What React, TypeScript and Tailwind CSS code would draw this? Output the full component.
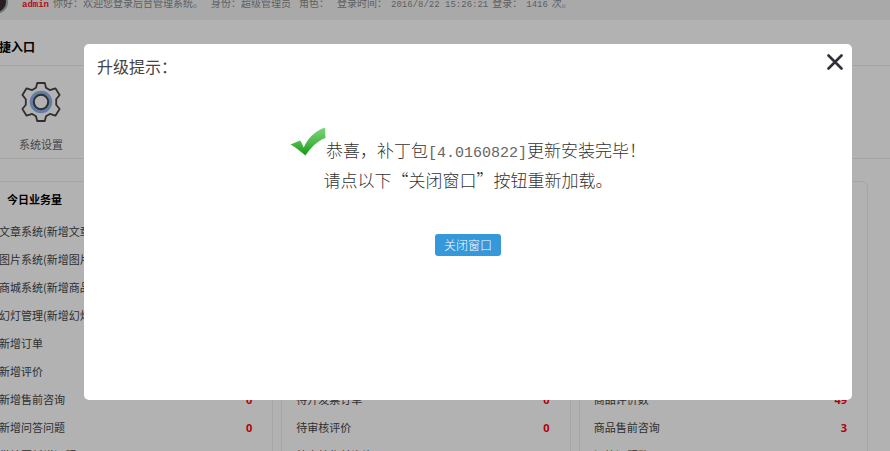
import React from "react";

interface StatRow {
  label: string;
  value?: string;
}

const todayRows: StatRow[] = [
  { label: "文章系统(新增文章)" },
  { label: "图片系统(新增图片)" },
  { label: "商城系统(新增商品)" },
  { label: "幻灯管理(新增幻灯)" },
  { label: "新增订单" },
  { label: "新增评价" },
  { label: "新增售前咨询", value: "0" },
  { label: "新增问答问题", value: "0" },
  { label: "供站回新增问题" },
];

const pendingRows: StatRow[] = [
  { label: "待开发票订单", value: "0" },
  { label: "待审核评价", value: "0" },
  { label: "待审核售前咨询" },
];

const totalRows: StatRow[] = [
  { label: "商品评价数", value: "49" },
  { label: "商品售前咨询", value: "3" },
  { label: "问答问题数" },
];

function GearIcon() {
  return (
    <svg viewBox="0 0 40 40" className="size-10" fill="none">
      <circle cx="20" cy="20" r="9" stroke="#8db5ee" strokeWidth="4.5" />
      <circle cx="20" cy="20" r="7.2" stroke="#444" strokeWidth="2" />
      <path
        d="M16.2 1h7.6l1.2 4.8 3.8 2.3 5.6-1.8 4.2 6.7-3.4 4.2v5.6l3.4 4.2-4.2 6.7-5.6-1.8-3.8 2.3-1.2 4.8h-7.6L15 34.2l-3.8-2.3-5.6 1.8-4.2-6.7 3.4-4.2v-5.6l-3.4-4.2 4.2-6.7 5.6 1.8L15 5.8z"
        stroke="#444"
        strokeWidth="1.8"
        strokeLinejoin="round"
      />
    </svg>
  );
}

function CheckIcon() {
  return (
    <svg viewBox="0 0 36 30" className="h-[30px] w-9">
      <defs>
        <linearGradient id="tick" x1="0" y1="0" x2="0" y2="1">
          <stop offset="0" stopColor="#7dd47b" />
          <stop offset="0.55" stopColor="#4cb84a" />
          <stop offset="1" stopColor="#109a14" />
        </linearGradient>
      </defs>
      <path
        d="M0.5 17.5 10 13.5c1.2 1.6 2.6 4.2 3.8 7C17 12.5 24.5 4 35 0.5c.4 3.5.3 7.5.5 10.5C27 14 20.5 21 15.5 28.5 11 25 6 20.5.5 17.5z"
        fill="url(#tick)"
      />
    </svg>
  );
}

function StatCard({ title, rows }: { title?: string; rows: StatRow[] }) {
  return (
    <section className="flex flex-col rounded-md border border-[#eee] pt-[7px]">
      {title && <h2 className="pl-[22px] text-[11px] leading-5 font-bold text-black">{title}</h2>}
      <ul className="mt-auto pt-2 pr-5 pl-[14px]">
        {rows.map((row) => (
          <li key={row.label} className="flex h-7 items-center justify-between text-[11px] text-[#444]">
            <span className="whitespace-nowrap">{row.label}</span>
            {row.value && (
              <b className="pt-[2px] font-['Open_Sans',sans-serif] text-[11px] text-[#ff0010]">{row.value}</b>
            )}
          </li>
        ))}
      </ul>
    </section>
  );
}

function Dashboard() {
  return (
    <div className="-mt-4 -ml-4">
      <header className="flex h-9 items-center bg-[#f3f3f3] text-[10px] whitespace-nowrap text-[#888]">
        <div className="mr-[14px] size-6 shrink-0 rounded-full border-2 border-[#9fb0b8] bg-[#3a2f2f]" />
        <div className="flex items-baseline gap-1 pt-1">
          <b className="font-['Liberation_Mono',monospace] text-[9px] text-[#ff1030]">admin</b>
          <span className="mr-1">你好：欢迎您登录后台管理系统。</span>
          <span className="mr-1">身份：超级管理员</span>
          <span className="mr-1">角色：</span>
          <span>登录时间：</span>
          <time className="font-['Liberation_Mono',monospace] text-[9px]">2016/8/22 15:26:21</time>
          <span>登录：</span>
          <span className="font-['Liberation_Mono',monospace] text-[9px]">1416</span>
          <span>次。</span>
        </div>
      </header>

      <section className="mt-4 border-b border-[#eee]">
        <h2 className="border-b border-[#eee] pt-[1px] pb-2 pl-[3px] text-[12px] leading-5 font-bold text-black">
          快捷入口
        </h2>
        <a
          href="#settings"
          className="ml-[35px] flex w-11 flex-col items-center gap-3 pt-4 pb-1 text-[11px] leading-5 text-[#666]"
        >
          <GearIcon />
          <span className="whitespace-nowrap">系统设置</span>
        </a>
      </section>

      <div className="mt-[22px] grid grid-cols-3 gap-2 pr-[22px]">
        <StatCard title="今日业务量" rows={todayRows} />
        <StatCard rows={pendingRows} />
        <StatCard rows={totalRows} />
      </div>
    </div>
  );
}

function UpgradeDialog() {
  return (
    <div className="absolute inset-0 bg-black/30 pt-11 pr-[38px] pl-[84px]">
      <div role="dialog" aria-labelledby="dialog-title" className="rounded-[5px] bg-white pb-36">
        <div className="flex items-start justify-between pt-2 pr-[7px] pl-[13px]">
          <h1 id="dialog-title" className="pt-[2px] text-[16px] leading-6 text-[#444]">
            升级提示：
          </h1>
          <button type="button" aria-label="关闭" className="flex size-5 items-center justify-center">
            <svg viewBox="0 0 16 16" className="size-4" stroke="#2d3137" strokeWidth="2.6" strokeLinecap="round">
              <path d="M1.5 1.5 14.5 14.5M14.5 1.5 1.5 14.5" />
            </svg>
          </button>
        </div>
        <div className="mt-[49px] flex flex-col items-center text-[17px] leading-[30px] font-light text-[#333]">
          <div className="flex items-start">
            <CheckIcon />
            <p className="pt-2">
              恭喜，补丁包
              <span className="font-['Liberation_Mono',monospace] text-[15px] leading-none text-[#666]">
                [4.0160822]
              </span>
              更新安装完毕！
            </p>
          </div>
          <p>请点以下“关闭窗口”按钮重新加载。</p>
          <button
            type="button"
            className="mt-[39px] rounded-[3px] bg-[#3498db] px-[9px] text-[12px] leading-[22px] text-white"
          >
            关闭窗口
          </button>
        </div>
      </div>
    </div>
  );
}

function App() {
  return (
    <main lang="zh-CN" className="relative h-screen overflow-hidden bg-white font-['Noto_Sans_CJK_SC',sans-serif]">
      <Dashboard />
      <UpgradeDialog />
    </main>
  );
}

export default App;
